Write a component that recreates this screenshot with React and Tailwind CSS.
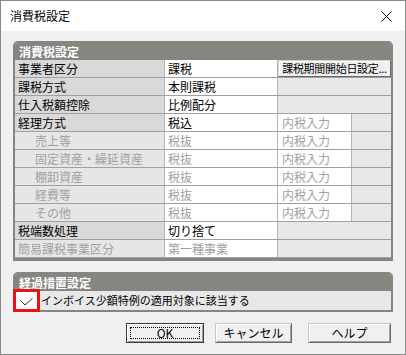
import React from 'react';

const FONT = { fontFamily: '"Noto Sans CJK JP", "Noto Sans", sans-serif' };

const ROWS = [
  { label: '事業者区分', value: '課税', third: 'button' },
  { label: '課税方式', value: '本則課税', third: 'gray' },
  { label: '仕入税額控除', value: '比例配分', third: 'gray' },
  { label: '経理方式', value: '税込', third: 'split' },
  { label: '売上等', value: '税抜', third: 'split', dis: true, indent: true },
  { label: '固定資産・繰延資産', value: '税抜', third: 'split', dis: true, indent: true },
  { label: '棚卸資産', value: '税抜', third: 'split', dis: true, indent: true },
  { label: '経費等', value: '税抜', third: 'split', dis: true, indent: true },
  { label: 'その他', value: '税抜', third: 'split', dis: true, indent: true },
  { label: '税端数処理', value: '切り捨て', third: 'gray' },
  { label: '簡易課税事業区分', value: '第一種事業', third: 'gray', dis: true },
];

function Btn({ children, def, className = '' }) {
  return (
    <button
      className={`relative h-[20px] bg-[#f0f0f0] border text-[12px] text-black leading-none flex items-center justify-center shadow-[inset_1px_1px_0_#ffffff,inset_-1px_-1px_0_#a0a0a0] ${
        def ? 'border-[#3c3c3c]' : 'border-[#c8c8c8] border-r-[#696969] border-b-[#696969]'
      } ${className}`}
    >
      {def && <span className="absolute inset-[3px] border border-dotted border-black" />}
      {children}
    </button>
  );
}

function Row({ r }) {
  const txt = r.dis ? 'text-[#a0a0a0]' : 'text-black';
  return (
    <div className="flex h-[18px] border-b border-[#a0a0a0] text-[12px] leading-none">
      <div
        className={`w-[150px] flex items-center border-r border-[#b4b4b4] ${r.indent ? 'pl-[20px]' : 'pl-[3px]'} ${
          r.dis ? 'bg-[#e6e6e6] text-[#a0a0a0]' : 'bg-[#d9d9d9] text-black'
        }`}
      >
        {r.label}
      </div>
      <div className={`w-[113px] flex items-center pl-[3px] bg-white border-r border-[#b4b4b4] ${txt}`}>{r.value}</div>
      <div className="flex-1 flex bg-[#e8e8e8]">
        {r.third === 'button' && (
          <button className="flex-1 h-[17px] bg-[#f0f0f0] border border-[#d0d0d0] border-r-[#696969] border-b-[#696969] shadow-[inset_1px_1px_0_#ffffff] text-[11px] tracking-[-0.3px] leading-none flex items-center justify-center text-black">
            課税期間開始日設定...
          </button>
        )}
        {r.third === 'split' && (
          <div className="w-[74px] bg-white border-r border-[#b4b4b4] flex items-center pl-[4px] text-[#a0a0a0]">内税入力</div>
        )}
      </div>
    </div>
  );
}

export default function App() {
  return (
    <div style={FONT} className="w-[406px] h-[355px] border border-[#8a8a8a] bg-[#f0f0f0] flex flex-col overflow-hidden">
      <div className="h-[30px] bg-white flex items-center justify-between pl-[9px] pr-[13px]">
        <span className="text-[12px] text-black leading-none">消費税設定</span>
        <svg width="11" height="11" viewBox="0 0 11 11">
          <path d="M0.5 0.5 L10.5 10.5 M10.5 0.5 L0.5 10.5" stroke="#111" strokeWidth="1" />
        </svg>
      </div>

      <div className="flex flex-col pl-[12px] pt-[10px]">
        <div className="w-[380px] border-2 border-b-[3px] border-[#86857f] rounded-t-[5px] overflow-hidden">
          <div className="h-[17px] bg-[#86857f] text-white font-bold text-[12px] leading-none flex items-center pl-[4px]">
            消費税設定
          </div>
          {ROWS.map((r) => (
            <Row key={r.label} r={r} />
          ))}
        </div>

        <div className="relative w-[380px] mt-[11px] border-2 border-[#86857f] rounded-t-[5px]">
          <div className="h-[17px] bg-[#86857f] text-white font-bold text-[12px] leading-none flex items-center pl-[4px] rounded-t-[3px]">
            経過措置設定
          </div>
          <div className="h-[19px] bg-[#e8e8e8] flex items-center pl-[26px] text-[11px] text-black leading-none">
            インボイス少額特例の適用対象に該当する
          </div>
          <div className="absolute left-[-2px] top-[15px] w-[27px] h-[23px] border-[3px] border-[#ee1111] bg-white flex items-center justify-center">
            <svg width="13" height="8" viewBox="0 0 13 8" className="mt-[3px]">
              <path d="M0.5 2.5 L5 7 L12.5 0.5" stroke="#333" strokeWidth="1" fill="none" />
            </svg>
          </div>
        </div>

        <div className="flex mt-[11px] pl-[113px]">
          <Btn def className="w-[78px]">OK</Btn>
          <Btn className="w-[77px] ml-[11px]">キャンセル</Btn>
          <Btn className="w-[83px] ml-[16px]">ヘルプ</Btn>
        </div>
      </div>
    </div>
  );
}
